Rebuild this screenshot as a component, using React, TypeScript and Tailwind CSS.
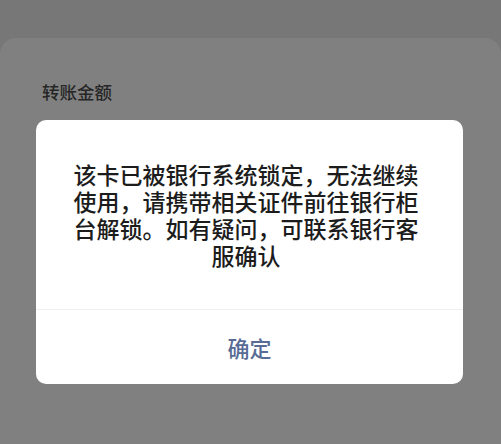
import React from "react";

export default function App() {
  return (
    <div
      className="relative h-[444px] w-[501px] overflow-hidden bg-[#777777] pt-[38px]"
      style={{ fontFamily: '"Noto Sans CJK SC", "Noto Sans", sans-serif' }}
    >
      {/* sheet behind the dialog, dimmed by the mask */}
      <div className="h-full rounded-t-[16px] bg-[#808080] px-[42px] pt-[42px]">
        <div className="text-[17.5px] font-medium leading-[24px] text-[#262626]">转账金额</div>
      </div>

      {/* alert dialog */}
      <div className="absolute left-[36px] top-[120px] flex h-[264px] w-[427px] flex-col overflow-hidden rounded-[10px] bg-white">
        <div className="flex flex-1 items-center justify-center pr-[7px]">
          <p className="w-[348px] text-center text-[23px] font-medium leading-[27px] text-[#1c1c1c]">
            该卡已被银行系统锁定，无法继续使用，请携带相关证件前往银行柜台解锁。如有疑问，可联系银行客服确认
          </p>
        </div>
        <div className="flex h-[75px] items-center justify-center border-t border-[#efefef]">
          <span className="text-[22px] font-medium leading-none text-[#576b95]">确定</span>
        </div>
      </div>
    </div>
  );
}
